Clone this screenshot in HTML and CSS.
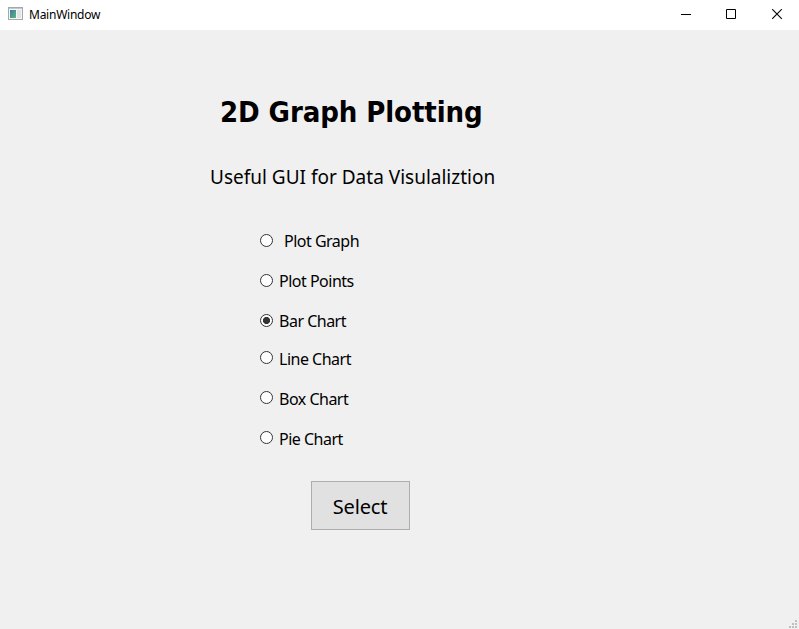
FILE: index.html
```html
<!DOCTYPE html>
<html lang="en">
<head>
<meta charset="utf-8">
<title>MainWindow</title>
<link rel="stylesheet" href="styles.css">
</head>
<body>
<div class="window">
  <header class="titlebar">
    <svg class="app-icon" width="15" height="13" viewBox="0 0 15 13">
      <defs>
        <linearGradient id="pane" x1="0" y1="0" x2="1" y2="1">
          <stop offset="0" stop-color="#3b78a8"/>
          <stop offset="1" stop-color="#5fb779"/>
        </linearGradient>
      </defs>
      <rect x=".5" y=".5" width="14" height="12" fill="#f4f5f6" stroke="#a3a8af"/>
      <rect x="1" y="1" width="13" height="1" fill="#c3c9d1"/>
      <rect x="2" y="3" width="6" height="8" fill="url(#pane)"/>
      <rect x="9" y="3" width="4" height="8" fill="#dfe5e3"/>
    </svg>
    <span class="caption">MainWindow</span>
    <div class="controls">
      <svg width="11" height="11" viewBox="0 0 11 11"><path d="M0 5.5H10" stroke="#000"/></svg>
      <svg width="11" height="11" viewBox="0 0 11 11"><path d="M.5 .5H9.5V9.5H.5Z" fill="none" stroke="#000"/></svg>
      <svg width="11" height="11" viewBox="0 0 11 11"><path d="M.2 .2L9.8 9.8M9.8 .2L.2 9.8" stroke="#000" stroke-width="1.1"/></svg>
    </div>
  </header>
  <main class="content">
    <h1 class="title">2D Graph Plotting</h1>
    <p class="subtitle">Useful GUI for Data Visulaliztion</p>
    <form class="options">
      <label class="option indented"><input type="radio" name="chart"><span>Plot Graph</span></label>
      <label class="option"><input type="radio" name="chart"><span>Plot Points</span></label>
      <label class="option"><input type="radio" name="chart" checked><span>Bar Chart</span></label>
      <label class="option raised"><input type="radio" name="chart"><span>Line Chart</span></label>
      <label class="option raised"><input type="radio" name="chart"><span>Box Chart</span></label>
      <label class="option raised"><input type="radio" name="chart"><span>Pie Chart</span></label>
    </form>
    <button class="select" type="button">Select</button>
  </main>
  <svg class="grip" width="8" height="8" viewBox="0 0 8 8" fill="#bfbfbf">
    <path d="M6 0h2v2H6zM3 3h2v2H3zM6 3h2v2H6zM0 6h2v2H0zM3 6h2v2H3zM6 6h2v2H6z"/>
  </svg>
</div>
</body>
</html>
```

FILE: styles.css
```css
* { box-sizing: border-box; }
body { margin: 0; font-family: "Noto Sans", sans-serif; color: #000; }
.window { position: relative; width: 799px; height: 629px; background: #f0f0f0; overflow: hidden; }
.titlebar { display: flex; align-items: center; height: 30px; padding-left: 8px; background: #fff; }
.app-icon { margin-bottom: 3px; }
.caption { margin-left: 6px; margin-bottom: 2px; font-size: 12px; letter-spacing: -.25px; }
.controls { display: flex; margin-left: auto; margin-bottom: 2px; gap: 35px; padding-right: 16px; }
.controls svg:nth-child(2) { margin-left: -1px; }
.content { padding-top: 63px; }
.title { margin: 0 0 0 220px; font: bold 29px/38px "DejaVu Sans Condensed", "DejaVu Sans", sans-serif; font-stretch: condensed; letter-spacing: -.1px; white-space: nowrap; }
.subtitle { margin: 31px 0 0 210px; font-size: 19px; line-height: 30px; white-space: nowrap; }
.options { margin: 29px 0 0 260px; }
.option { display: flex; align-items: center; height: 40px; font-size: 16px; letter-spacing: -.5px; }
.option input { appearance: none; width: 13px; height: 13px; margin: 0 6px 2px 0; border: 1px solid #333; border-radius: 50%; background: #fff; }
.option input:checked { background: radial-gradient(circle, #333 0 3.2px, #fff 3.9px); }
.indented span { margin-left: 5px; }
.option:nth-child(4) { margin-top: -2px; }
.raised input { margin-bottom: 4px; }
.select { display: block; width: 99px; height: 49px; margin: 22px 0 0 311px; padding: 2px 1px 0 0; border: 1px solid #adadad; background: #e1e1e1; color: #000; font: 20px "Noto Sans", sans-serif; letter-spacing: -.2px; }
.grip { position: absolute; right: 2px; bottom: 1px; }
```
